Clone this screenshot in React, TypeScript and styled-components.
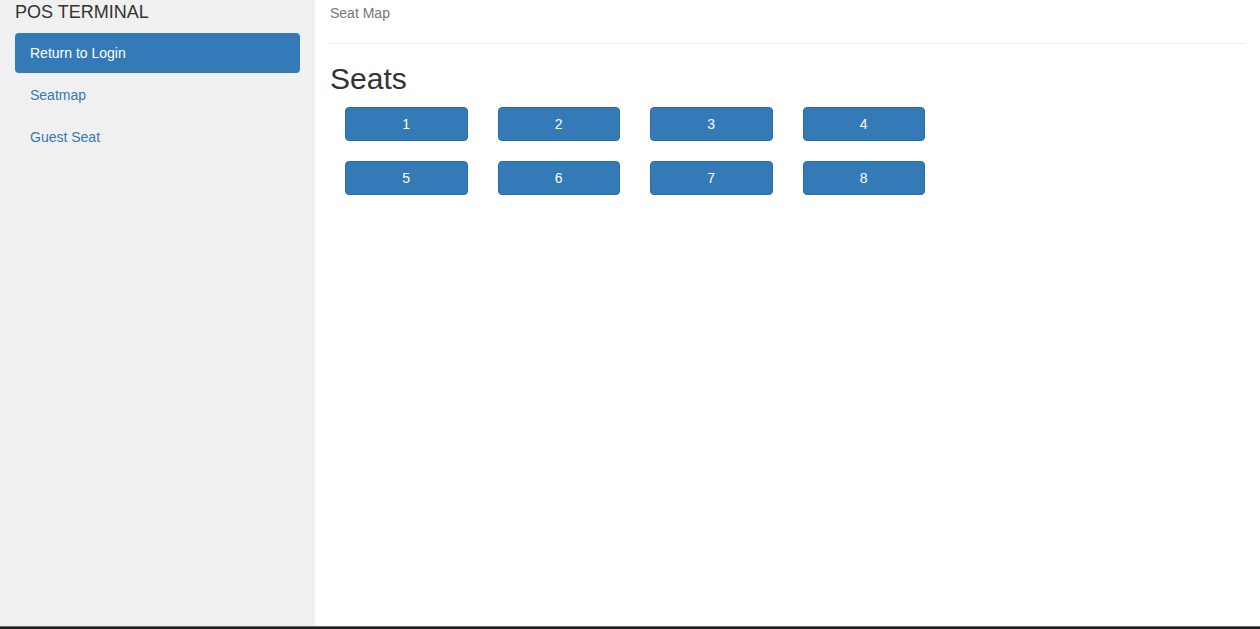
import React from "react";
import styled, { createGlobalStyle } from "styled-components";

const Global = createGlobalStyle`
  html, body { margin: 0; padding: 0; height: 100%; }
  body { font-family: "Liberation Sans", Arial, sans-serif; font-size: 14px; line-height: 20px; color: #333; background: #fff; }
  #root { height: 100%; }
  * { box-sizing: border-box; }
`;

const Page = styled.div`
  height: 100vh;
  display: flex;
  flex-direction: column;
`;

const Body = styled.div`
  flex: 1;
  display: flex;
  min-height: 0;
`;

const Sidebar = styled.aside`
  width: 315px;
  flex: none;
  background: #f0f0f0;
  padding: 0 15px;
`;

const Brand = styled.div`
  font-size: 18px;
  line-height: 24px;
  padding-top: 0;
  color: #333;
  margin-bottom: 9px;
`;

const Nav = styled.nav`
  display: flex;
  flex-direction: column;
  gap: 2px;
`;

const NavLink = styled.a<{ $active?: boolean }>`
  display: block;
  padding: 10px 15px;
  line-height: 20px;
  border-radius: 4px;
  text-decoration: none;
  color: ${(p) => (p.$active ? "#fff" : "#337ab7")};
  background: ${(p) => (p.$active ? "#337ab7" : "transparent")};
`;

const Main = styled.main`
  flex: 1;
  padding: 0 15px;
`;

const Crumb = styled.div`
  color: #777;
  padding-top: 3px;
  line-height: 20px;
`;

const Rule = styled.hr`
  border: 0;
  border-top: 1px solid #eee;
  margin: 20px 0 0;
`;

const Title = styled.h1`
  font-size: 30px;
  font-weight: 400;
  line-height: 33px;
  margin: 18px 0 0;
  color: #333;
`;

const SeatGrid = styled.div`
  display: grid;
  grid-template-columns: repeat(4, 122.5px);
  column-gap: 30px;
  row-gap: 20px;
  padding-left: 15px;
  margin-top: 12px;
`;

const SeatButton = styled.button`
  height: 34px;
  background: #337ab7;
  border: 1px solid #2e6da4;
  border-radius: 4px;
  color: #fff;
  font-family: "Liberation Sans", Arial, sans-serif;
  font-size: 14px;
  line-height: 20px;
  padding: 6px 12px;
  cursor: pointer;
`;

const BottomBar = styled.div`
  height: 3px;
  flex: none;
  background: #1e1e1e;
  border-top: 1px solid #6a6a6a;
`;

export default function App() {
  const seats = [1, 2, 3, 4, 5, 6, 7, 8];
  return (
    <Page>
      <Global />
      <Body>
        <Sidebar>
          <Brand>POS TERMINAL</Brand>
          <Nav>
            <NavLink $active href="#">Return to Login</NavLink>
            <NavLink href="#">Seatmap</NavLink>
            <NavLink href="#">Guest Seat</NavLink>
          </Nav>
        </Sidebar>
        <Main>
          <Crumb>Seat Map</Crumb>
          <Rule />
          <Title>Seats</Title>
          <SeatGrid>
            {seats.map((s) => (
              <SeatButton key={s}>{s}</SeatButton>
            ))}
          </SeatGrid>
        </Main>
      </Body>
      <BottomBar />
    </Page>
  );
}
